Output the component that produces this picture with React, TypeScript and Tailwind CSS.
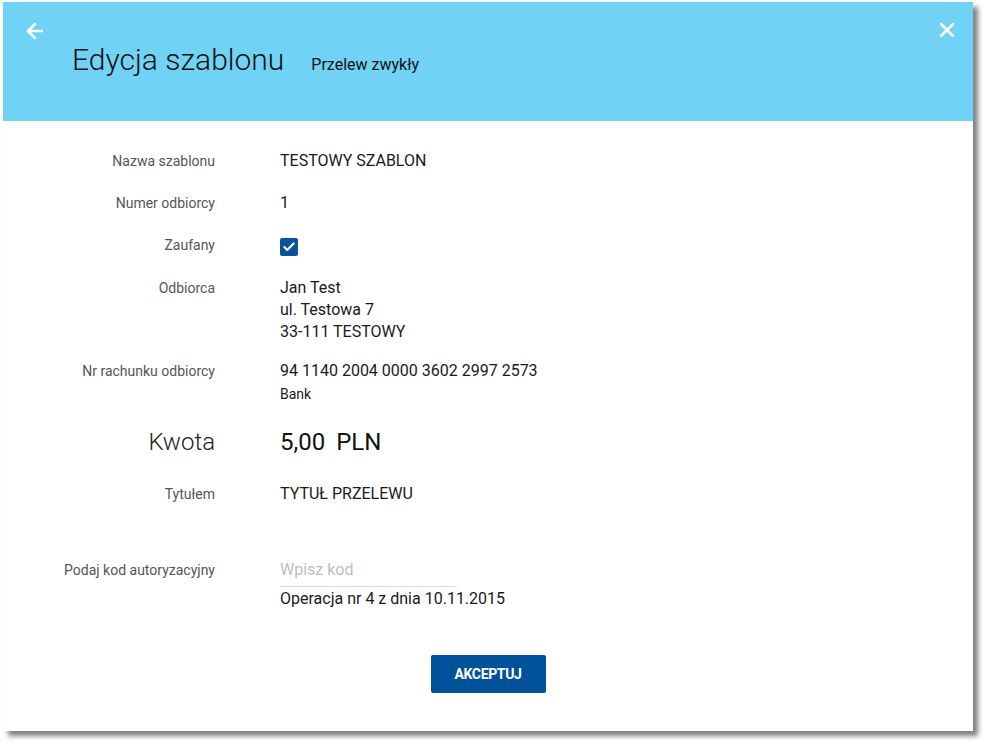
import { ArrowLeft, X, Check } from "lucide-react";

const font = { fontFamily: "Roboto, 'Liberation Sans', sans-serif" };

function Row({ label, children, className = "" }: { label: string; children: React.ReactNode; className?: string }) {
  return (
    <div className={`flex items-baseline ${className}`}>
      <div className="w-[212px] shrink-0 text-right text-[14px] leading-[24px] text-[#555]">{label}</div>
      <div className="ml-[65px] text-[16px] leading-[24px] text-[#1a1a1a]">{children}</div>
    </div>
  );
}

export default function App() {
  return (
    <div className="min-h-screen bg-white pl-[3px] pt-[2px]" style={font}>
      <div className="w-[970px] h-[729px] bg-white shadow-[5px_5px_5px_rgba(0,0,0,0.5)] flex flex-col">
        {/* Header */}
        <div className="h-[119px] bg-[#70d3f6] relative">
          <button className="absolute left-[20px] top-[17px] text-white">
            <ArrowLeft size={24} strokeWidth={2.5} />
          </button>
          <button className="absolute right-[14px] top-[16px] text-white">
            <X size={24} strokeWidth={2.5} />
          </button>
          <div className="flex items-baseline pl-[69px] pt-[38px]">
            <h1 className="text-[30px] font-light leading-[40px] text-[#111]">Edycja szablonu</h1>
            <span className="ml-[27px] text-[16px] text-[#111]">Przelew zwykły</span>
          </div>
        </div>

        {/* Body */}
        <div className="pt-[28px] flex flex-col">
          <Row label="Nazwa szablonu">TESTOWY SZABLON</Row>
          <Row label="Numer odbiorcy" className="mt-[18px]">1</Row>
          <div className="flex items-center mt-[18px]">
            <div className="w-[212px] shrink-0 text-right text-[14px] leading-[24px] text-[#555]">Zaufany</div>
            <div className="ml-[65px] w-[18px] h-[18px] rounded-[2px] bg-[#0a539c] flex items-center justify-center mt-[4px]">
              <Check size={14} strokeWidth={3.5} className="text-white" />
            </div>
          </div>
          <div className="flex items-baseline mt-[20px]">
            <div className="w-[212px] shrink-0 text-right text-[14px] leading-[22px] text-[#555]">Odbiorca</div>
            <div className="ml-[65px] text-[16px] leading-[22px] text-[#1a1a1a]">
              <div>Jan Test</div>
              <div>ul. Testowa 7</div>
              <div>33-111 TESTOWY</div>
            </div>
          </div>
          <div className="flex items-baseline mt-[16px]">
            <div className="w-[212px] shrink-0 text-right text-[14px] leading-[24px] text-[#555]">Nr rachunku odbiorcy</div>
            <div className="ml-[65px]">
              <div className="text-[16px] leading-[24px] text-[#1a1a1a]">94 1140 2004 0000 3602 2997 2573</div>
              <div className="text-[14px] leading-[20px] mt-[1px] text-[#1a1a1a]">Bank</div>
            </div>
          </div>
          <div className="flex items-baseline mt-[22px]">
            <div className="w-[212px] shrink-0 text-right text-[24px] font-light leading-[32px] text-[#222]">Kwota</div>
            <div className="ml-[65px] text-[24px] font-normal leading-[32px] text-[#111]">
              5,00<span className="ml-[11px]">PLN</span>
            </div>
          </div>
          <Row label="Tytułem" className="mt-[24px]">TYTUŁ PRZELEWU</Row>
          <div className="flex items-baseline mt-[52px]">
            <div className="w-[212px] shrink-0 text-right text-[14px] leading-[24px] text-[#555]">Podaj kod autoryzacyjny</div>
            <div className="ml-[65px]">
              <input
                placeholder="Wpisz kod"
                className="w-[177px] text-[16px] leading-[24px] pb-[4px] border-b border-[#dcdcdc] outline-none placeholder:text-[#bdbdbd] text-[#1a1a1a]"
                style={font}
              />
              <div className="text-[16px] leading-[24px] text-[#1a1a1a]">Operacja nr 4 z dnia 10.11.2015</div>
            </div>
          </div>
          <div className="flex justify-center mt-[44px]">
            <button className="w-[115px] h-[38px] rounded-[2px] bg-[#00529b] text-white text-[14px] font-bold tracking-tight">
              AKCEPTUJ
            </button>
          </div>
        </div>
      </div>
    </div>
  );
}
